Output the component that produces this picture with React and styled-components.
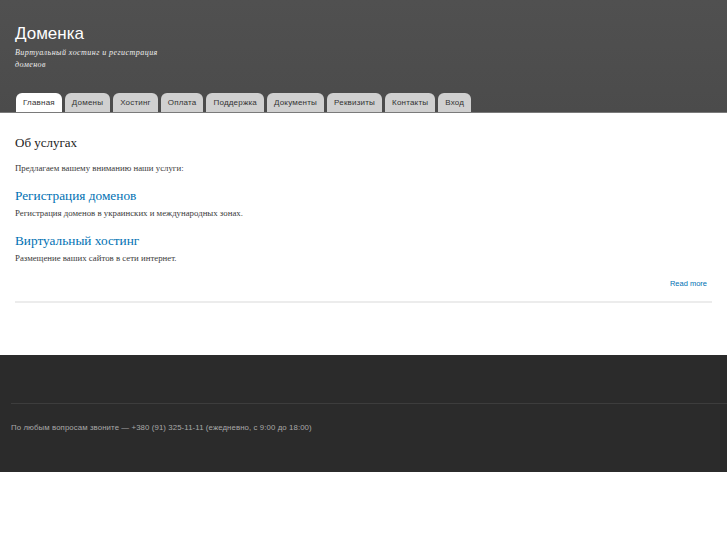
import React from "react";
import styled, { createGlobalStyle } from "styled-components";

const GlobalStyle = createGlobalStyle`
  html, body {
    margin: 0;
    padding: 0;
    background: #fff;
  }
  body {
    font-family: "Liberation Serif", Georgia, serif;
    color: #3b3b3b;
  }
`;

const Header = styled.header`
  background: linear-gradient(#505050, #4b4b4b);
  height: 112px;
  border-bottom: 1px solid #7a7a7a;
  display: flex;
  flex-direction: column;
  padding: 0 15px;
`;

const Branding = styled.div`
  padding-top: 24px;
  flex: 1;
`;

const SiteName = styled.h1`
  margin: 0;
  font-family: "Liberation Sans", Arial, sans-serif;
  font-weight: normal;
  font-size: 17px;
  line-height: 20px;
  color: #fff;
`;

const Slogan = styled.div`
  margin-top: 3px;
  width: 165px;
  font-style: italic;
  font-size: 8px;
  line-height: 12px;
  color: #eee;
  letter-spacing: 0.45px;
`;

const Tabs = styled.nav`
  display: flex;
  gap: 3px;
  padding-left: 1px;
`;

const Tab = styled.a`
  display: block;
  height: 19px;
  line-height: 19px;
  padding: 0 7px;
  border-radius: 6px 6px 0 0;
  font-family: "Liberation Sans", Arial, sans-serif;
  font-size: 8px;
  letter-spacing: 0.2px;
  color: #333;
  background: ${(p) => (p.$active ? "#fff" : "#d0d0d0")};
  text-decoration: none;
`;

const Main = styled.main`
  padding: 22px 15px 52px;
`;

const PageTitle = styled.h2`
  margin: 0 0 12px;
  font-weight: normal;
  font-size: 13px;
  line-height: 16px;
  color: #222;
`;

const Text = styled.p`
  margin: 0;
  font-size: 8.8px;
  line-height: 11px;
  color: #3b3b3b;
`;

const Section = styled.div`
  margin-top: 14px;
`;

const SectionTitle = styled.h3`
  margin: 0 0 4px;
  font-weight: normal;
  font-size: 13.3px;
  line-height: 16px;
  color: #0071b3;
`;

const MoreRow = styled.div`
  display: flex;
  justify-content: flex-end;
  padding-right: 5px;
  margin-top: 15px;
  padding-bottom: 13px;
  border-bottom: 2px solid #ececec;
`;

const More = styled.a`
  font-family: "Liberation Sans", Arial, sans-serif;
  font-size: 7.5px;
  color: #0071b3;
  text-decoration: none;
`;

const Footer = styled.footer`
  background: #2b2b2b;
  height: 117px;
  padding: 48px 0 0 11px;
  box-sizing: border-box;
`;

const FooterLine = styled.div`
  height: 1px;
  background: #3d3d3d;
`;

const FooterText = styled.div`
  margin-top: 19px;
  font-family: "Liberation Sans", Arial, sans-serif;
  font-size: 7.8px;
  letter-spacing: 0.1px;
  color: #a8a8a8;
`;

const tabs = [
  "Главная",
  "Домены",
  "Хостинг",
  "Оплата",
  "Поддержка",
  "Документы",
  "Реквизиты",
  "Контакты",
  "Вход",
];

export default function App() {
  return (
    <>
      <GlobalStyle />
      <Header>
        <Branding>
          <SiteName>Доменка</SiteName>
          <Slogan>Виртуальный хостинг и регистрация доменов</Slogan>
        </Branding>
        <Tabs>
          {tabs.map((t, i) => (
            <Tab key={t} $active={i === 0}>
              {t}
            </Tab>
          ))}
        </Tabs>
      </Header>
      <Main>
        <PageTitle>Об услугах</PageTitle>
        <Text>Предлагаем вашему вниманию наши услуги:</Text>
        <Section>
          <SectionTitle>Регистрация доменов</SectionTitle>
          <Text>Регистрация доменов в украинских и международных зонах.</Text>
        </Section>
        <Section>
          <SectionTitle>Виртуальный хостинг</SectionTitle>
          <Text>Размещение ваших сайтов в сети интернет.</Text>
        </Section>
        <MoreRow>
          <More>Read more</More>
        </MoreRow>
      </Main>
      <Footer>
        <FooterLine />
        <FooterText>
          По любым вопросам звоните — +380 (91) 325-11-11 (ежедневно, с 9:00 до 18:00)
        </FooterText>
      </Footer>
    </>
  );
}
